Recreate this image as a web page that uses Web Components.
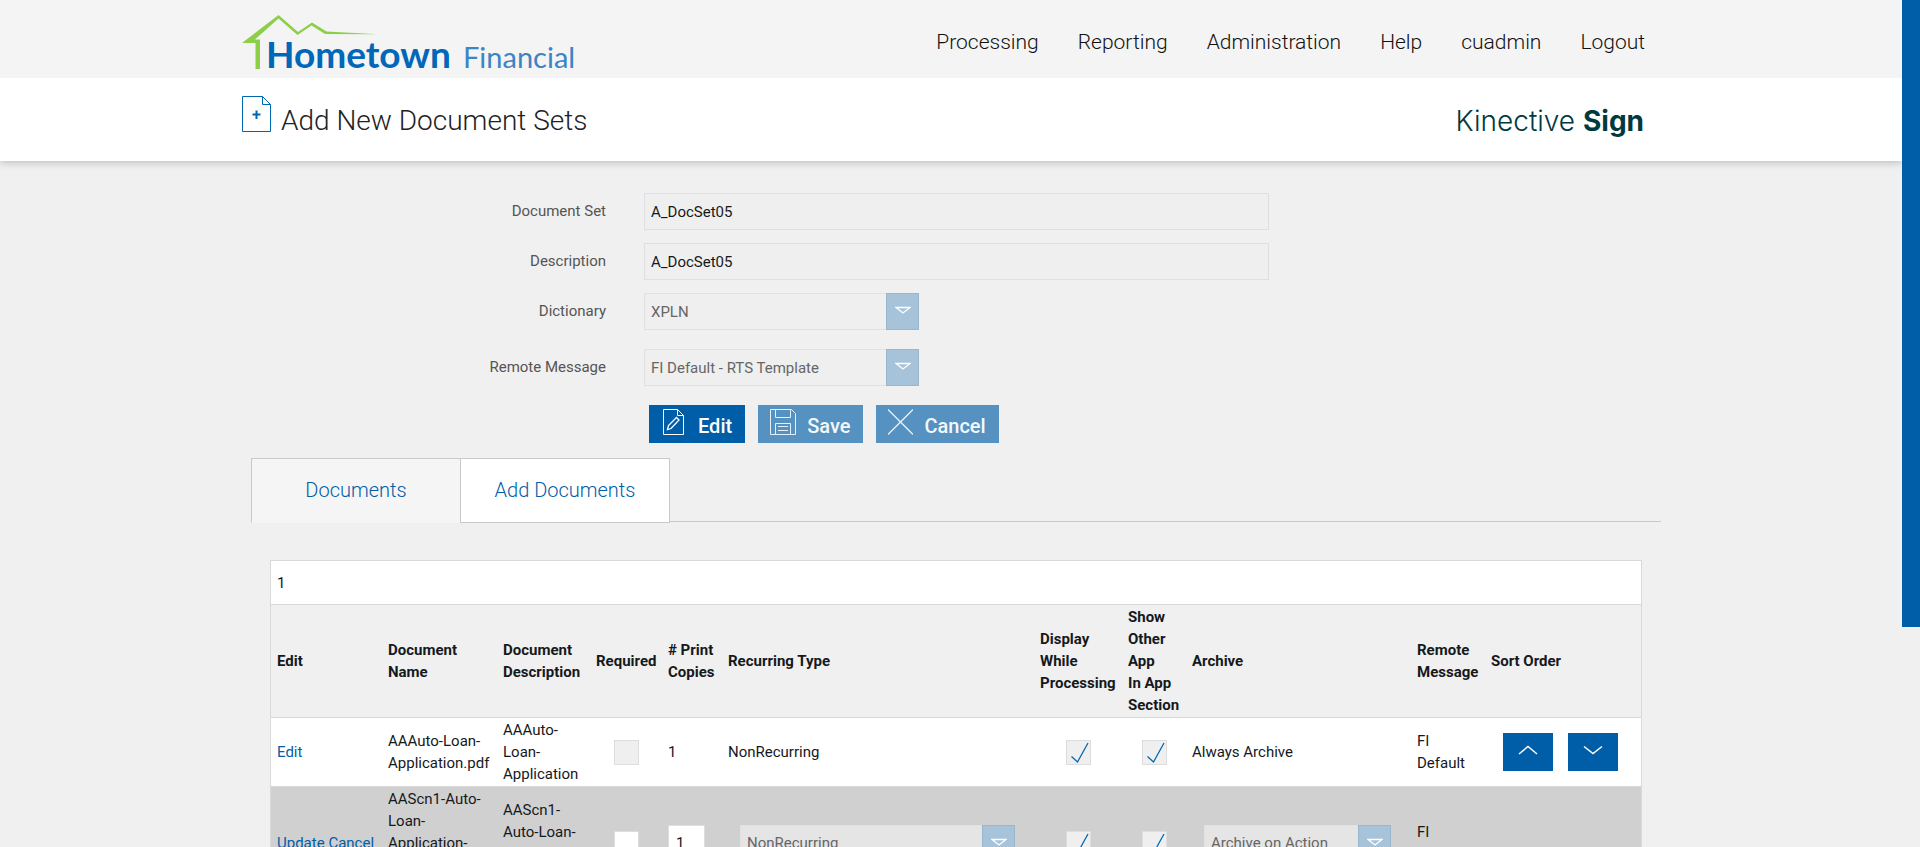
<!DOCTYPE html>
<html lang="en">
<head>
<meta charset="utf-8">
<title>Add New Document Sets</title>
<style>
  html, body { margin: 0; }
  html { scrollbar-width: none; }
  body { background: #f0f0f0; font-family: Roboto, "Liberation Sans", sans-serif; font-size: 15px; line-height: 22px; color: #16191c; }
</style>
</head>
<body>
<app-shell>
  <site-header slot="header">
    <nav-link href="#processing">Processing</nav-link>
    <nav-link href="#reporting">Reporting</nav-link>
    <nav-link href="#administration">Administration</nav-link>
    <nav-link href="#help">Help</nav-link>
    <nav-link href="#account">cuadmin</nav-link>
    <nav-link href="#logout">Logout</nav-link>
  </site-header>
  <title-bar slot="header">Add New Document Sets</title-bar>
  <document-set-form></document-set-form>
  <tab-bar>
    <tab-item selected>Documents</tab-item>
    <tab-item>Add Documents</tab-item>
  </tab-bar>
  <document-grid></document-grid>
</app-shell>

<script>
const define = (name, html, setup) => {
  const template = document.createElement('template');
  template.innerHTML = html;
  customElements.define(name, class extends HTMLElement {
    connectedCallback() {
      if (this.shadowRoot) return;
      const root = this.attachShadow({ mode: 'open' });
      root.append(template.content.cloneNode(true));
      if (setup) setup(this, root);
    }
  });
};

define('app-shell', `
  <style>
    :host { display: grid; grid-template-columns: minmax(0, 1fr) 18px; min-height: 100vh; }
    main { max-width: 1420px; margin: 0 auto; padding: 32px 0; }
    .rail { position: sticky; top: 0; height: 100vh; background: #f0f0f0; }
    .thumb { height: 74%; background: #005ea8; }
  </style>
  <div class="page">
    <slot name="header"></slot>
    <main><slot></slot></main>
  </div>
  <div class="rail" aria-hidden="true"><div class="thumb"></div></div>
`);

define('site-logo', `
  <style>
    :host { display: block; }
    a, svg { display: block; }
    text { font-family: Lato, sans-serif; }
  </style>
  <a href="#home" aria-label="Hometown Financial">
    <svg width="336" height="62" viewBox="0 0 336 62">
      <path d="M0 36 L36.500 8 L56 25 L70 15.500 L84.500 24.500 L136 27.300 L83 27 L69.500 18.500 L55.500 28 L36.500 11.500 L13 32.500 H18 V62 H13.500 V36 Z" fill="#8dcf48"/>
      <text x="24" y="61" font-size="37" font-weight="700" fill="#0067b9">Hometown</text>
      <text x="221" y="61" font-size="29" font-weight="400" fill="#3c85c4">Financial</text>
    </svg>
  </a>
`);

define('nav-link', `
  <style>
    :host { display: block; }
    a { color: #111; text-decoration: none; font-size: 21px; font-weight: 300; line-height: 32px; }
  </style>
  <a><slot></slot></a>
`, (el, root) => { root.querySelector('a').href = el.getAttribute('href'); });

define('site-header', `
  <style>
    :host { display: block; background: #f4f4f4; }
    .bar { max-width: 1420px; height: 78px; margin: 0 auto; padding: 0 16px 0 1px; box-sizing: border-box; display: flex; justify-content: space-between; align-items: flex-start; }
    site-logo { padding-top: 7px; }
    nav { display: flex; gap: 39px; padding-top: 26px; }
  </style>
  <div class="bar">
    <site-logo></site-logo>
    <nav aria-label="Main"><slot></slot></nav>
  </div>
`);

define('title-bar', `
  <style>
    :host { display: block; background: #fff; box-shadow: 0 1px 8px rgba(0, 0, 0, .25); clip-path: inset(0 0 -12px 0); }
    .bar { max-width: 1420px; height: 83px; margin: 0 auto; padding: 18px 17px 0 1px; box-sizing: border-box; display: flex; gap: 9px; align-items: flex-start; }
    h1 { margin: 8px 0 0; flex: 1; font-size: 28px; font-weight: 300; line-height: 34px; color: #222; }
    .brand { margin-top: 8px; font-family: Inter, sans-serif; font-size: 28px; font-weight: 300; line-height: 34px; color: #003a40; }
    b { font-weight: 700; }
  </style>
  <div class="bar">
    <svg width="30" height="37" viewBox="0 0 30 37" fill="none" stroke="#0067b1">
      <path d="M.5 .5 H20.500 L28.500 8.500 V35.500 H.5 Z M20.500 .5 V8.500 H28.500"/>
      <path d="M14.500 14.500 V23 M10.500 18.500 H18.500" stroke-width="2"/>
    </svg>
    <h1><slot></slot></h1>
    <div class="brand">Kinective <b>Sign</b></div>
  </div>
`);

define('drop-down', `
  <style>
    :host { display: block; width: 275px; }
    .box { position: relative; height: 37px; display: grid; }
    select { appearance: none; margin: 0; width: 100%; height: 37px; padding: 0 40px 0 6px; border: 1px solid #e1e1e1; border-radius: 0; background: var(--field, #efefef); font: inherit; color: #666; opacity: 1; }
    .arrow { position: absolute; right: 0; top: 0; width: 33px; height: 37px; box-sizing: border-box; border: 1px solid #97b7cf; background: #a7c3da; pointer-events: none; display: flex; justify-content: center; padding-top: 12px; }
  </style>
  <div class="box">
    <select disabled><option></option></select>
    <span class="arrow"><svg width="16" height="9" viewBox="0 0 16 9" fill="none" stroke="#fff" stroke-width="1.300"><path d="M1 1.500 H15 L8 7 Z"/></svg></span>
  </div>
`, (el, root) => {
  root.querySelector('option').textContent = el.getAttribute('value');
  root.querySelector('select').setAttribute('aria-label', el.getAttribute('label'));
});

define('form-row', `
  <style>
    :host { display: grid; grid-template-columns: 365px minmax(0, 625px); column-gap: 38px; }
    label { text-align: right; color: #555; line-height: 22px; padding-top: 7px; }
    input { width: 100%; height: 37px; box-sizing: border-box; padding: 0 6px; border: 1px solid #dfdfdf; background: #efefef; font: inherit; color: #16191c; }
  </style>
  <label for="field"></label>
`, (el, root) => {
  const label = root.querySelector('label');
  label.textContent = el.getAttribute('label');
  if (el.getAttribute('kind') === 'select') {
    const drop = document.createElement('drop-down');
    drop.id = 'field';
    drop.setAttribute('label', el.getAttribute('label'));
    drop.setAttribute('value', el.getAttribute('value'));
    root.append(drop);
  } else {
    const input = document.createElement('input');
    input.id = 'field';
    input.readOnly = true;
    input.value = el.getAttribute('value');
    root.append(input);
  }
});

define('action-button', `
  <style>
    :host { display: block; }
    button { display: flex; height: 38px; box-sizing: border-box; padding: 4px 13px 0 12px; gap: 11px; border: 0; background: #005ea8; color: #fff; font: 500 20px/34px Roboto, sans-serif; }
    :host([disabled]) button { background: #5591c1; color: #f4f8fb; }
    ::slotted(svg) { display: block; fill: none; stroke: #fff; }
    :host([disabled]) ::slotted(svg) { stroke: #e6eff6; }
  </style>
  <button type="button"><slot name="icon"></slot><span><slot></slot></span></button>
`, (el, root) => { root.querySelector('button').disabled = el.hasAttribute('disabled'); });

define('document-set-form', `
  <style>
    :host { display: block; }
    form { display: grid; row-gap: 13px; }
    .message { margin-top: 6px; }
    .actions { display: flex; gap: 13px; padding-left: 408px; margin-top: 6px; }
  </style>
  <form>
    <form-row label="Document Set" value="A_DocSet05"></form-row>
    <form-row label="Description" value="A_DocSet05"></form-row>
    <form-row label="Dictionary" kind="select" value="XPLN"></form-row>
    <form-row class="message" label="Remote Message" kind="select" value="FI Default - RTS Template"></form-row>
    <div class="actions">
      <action-button><svg slot="icon" width="26" height="28" viewBox="-1 0 26 28"><path d="M1.500 .5 H15.500 L21.500 6.500 V25.500 H1.500 Z M15.500 .5 V6.500 H21.500"/><path d="M5.500 20.500 L6.500 16.500 L14.500 8.500 L17 11 L9 19.500 Z" stroke-width="1.300"/></svg>Edit</action-button>
      <action-button disabled><svg slot="icon" width="26" height="28" viewBox="0 0 26 28"><path d="M.5 .5 H21.500 L25.500 4.500 V25.500 H.5 Z M5.500 .5 V8.500 H20.500 V.5 M5.500 25.500 V14.500 H20.500 V25.500 M8 17.500 H18 M8 21.500 H18"/></svg>Save</action-button>
      <action-button disabled><svg slot="icon" width="25" height="28" viewBox="0 0 25 28"><path d="M0 .5 L25 25.500 M25 .5 L0 25.500" stroke-width="1.300"/></svg>Cancel</action-button>
    </div>
  </form>
`);

define('tab-item', `
  <style>
    :host { display: block; }
    button { width: 210px; height: 65px; padding: 0 0 1px; border: 1px solid #c9c9c9; background: #fff; color: #005ea8; font: 300 20px/24px Roboto, sans-serif; }
    :host([selected]) button { background: #f5f5f5; border-bottom-color: #f5f5f5; }
  </style>
  <button type="button" role="tab"><slot></slot></button>
`, (el, root) => { root.querySelector('button').setAttribute('aria-selected', el.hasAttribute('selected')); });

define('tab-bar', `
  <style>
    :host { display: block; margin: 15px 0 0 10px; }
    .tabs { display: flex; height: 63px; border-bottom: 1px solid #c9c9c9; }
    ::slotted(tab-item:not([selected])) { margin-left: -1px; }
  </style>
  <div class="tabs" role="tablist"><slot></slot></div>
`);

define('tick-box', `
  <style>
    :host { display: block; width: 25px; margin: 0 auto; }
    .box { position: relative; display: grid; }
    input { appearance: none; margin: 0; width: 25px; height: 25px; border: 1px solid #ddd; background: var(--field, #efefef); }
    svg { position: absolute; left: 5px; top: 2px; display: none; pointer-events: none; }
    input:checked + svg { display: block; }
  </style>
  <div class="box"><input type="checkbox" disabled><svg width="18" height="22" viewBox="0 0 18 22" fill="none" stroke="#0067b1" stroke-width="1.300"><path d="M.5 14.500 L6.500 20 L17 1"/></svg></div>
`, (el, root) => {
  const input = root.querySelector('input');
  input.checked = el.hasAttribute('checked');
  input.setAttribute('aria-label', el.getAttribute('label'));
});

define('sort-button', `
  <style>
    :host { display: block; }
    button { display: flex; justify-content: center; width: 50px; height: 38px; padding: 12px 0 0; border: 0; background: #005ea8; }
    svg { fill: none; stroke: #fff; stroke-width: 1.500; }
  </style>
  <button type="button"><svg width="20" height="10" viewBox="0 0 20 10"><path/></svg></button>
`, (el, root) => {
  const up = el.getAttribute('direction') === 'up';
  root.querySelector('path').setAttribute('d', up ? 'M1 9 L10 1.500 L19 9' : 'M1 1.500 L10 8.500 L19 1.500');
  root.querySelector('button').setAttribute('aria-label', up ? 'Move up' : 'Move down');
});

define('document-grid', `
  <style>
    :host { display: block; margin: 38px 19px 0 29px; }
    .frame { border: 1px solid #d9d9d9; background: #fff; }
    .pager { height: 43px; padding-left: 6px; line-height: 44px; border-bottom: 1px solid #d9d9d9; }
    table { width: 100%; table-layout: fixed; border-collapse: separate; border-spacing: 0; }
    th, td { padding: 1px 6px; text-align: left; vertical-align: middle; }
    tr > * { border-bottom: 1px solid #d9d9d9; }
    th { background: #f0f0f0; font-weight: 700; }
    td.center { padding: 1px 0; }
    th.tight { padding-right: 0; }
    a { color: #005ea8; text-decoration: none; }
    .sort { display: flex; gap: 15px; padding-left: 12px; }
    .editing { background: #d0d0d0; }
    .editing drop-down { --field: #e5e5e5; margin-left: 12px; }
    .editing .open { --field: #fff; }
    .archive drop-down { width: 187px; }
    input { width: 37px; height: 37px; box-sizing: border-box; padding: 0 7px; border: 1px solid #ddd; background: #fff; font: inherit; color: inherit; display: block; }
  </style>
  <div class="frame">
    <div class="pager">1</div>
    <table>
      <colgroup>
        <col style="width:111px"><col style="width:115px"><col style="width:93px"><col style="width:72px"><col style="width:60px"><col style="width:312px">
        <col style="width:88px"><col style="width:64px"><col style="width:225px"><col style="width:74px"><col style="width:156px">
      </colgroup>
      <thead>
        <tr><th>Edit</th><th>Document Name</th><th>Document Description</th><th class="tight">Required</th><th class="tight"># Print Copies</th><th>Recurring Type</th><th>Display While Processing</th><th>Show Other App In&nbsp;App Section</th><th>Archive</th><th>Remote Message</th><th>Sort Order</th></tr>
      </thead>
      <tbody>
        <tr>
          <td><a href="#edit">Edit</a></td><td>AAAuto-Loan-Application.pdf</td><td>AAAuto-Loan-Application</td>
          <td class="center"><tick-box label="Required"></tick-box></td><td>1</td><td>NonRecurring</td>
          <td class="center"><tick-box checked label="Display while processing"></tick-box></td><td class="center"><tick-box checked label="Show other app"></tick-box></td>
          <td>Always Archive</td><td>FI Default</td>
          <td><div class="sort"><sort-button direction="up"></sort-button><sort-button direction="down"></sort-button></div></td>
        </tr>
        <tr class="editing">
          <td><a href="#update">Update</a> <a href="#cancel">Cancel</a></td><td>AAScn1-Auto-Loan-Application-<br>Scan-<br>Copy.pdf</td><td>AAScn1-Auto-Loan-Application-Scan</td>
          <td class="center"><tick-box class="open" label="Required"></tick-box></td><td><input value="1" aria-label="Print copies"></td>
          <td><drop-down label="Recurring type" value="NonRecurring"></drop-down></td>
          <td class="center"><tick-box checked label="Display while processing"></tick-box></td><td class="center"><tick-box checked label="Show other app"></tick-box></td>
          <td class="archive"><drop-down label="Archive" value="Archive on Action"></drop-down></td><td>FI Default</td><td></td>
        </tr>
      </tbody>
    </table>
  </div>
`);
</script>
</body>
</html>
